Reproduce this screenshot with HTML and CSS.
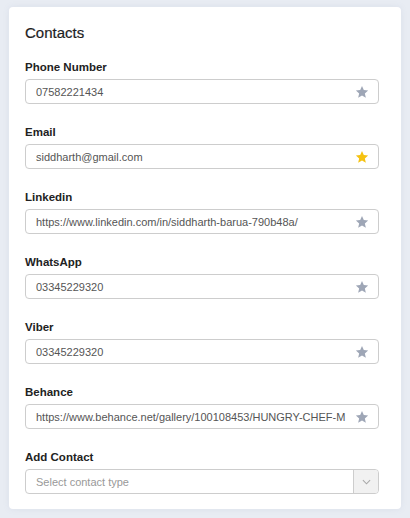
FILE: index.html
```html
<!DOCTYPE html>
<html>
<head>
<meta charset="utf-8">
<link rel="stylesheet" href="styles.css">
</head>
<body>
<div class="card">
  <h2 class="title">Contacts</h2>
  <div class="field">
    <label class="label">Phone Number</label>
    <div class="control"><span class="value">07582221434</span><svg class="star" viewBox="0 0 24 24"><path d="M12 1.8l3.1 6.9 7.4.7-5.6 5 1.7 7.4L12 18l-6.6 3.8 1.7-7.4-5.6-5 7.4-.7z"/></svg></div>
  </div>
  <div class="field">
    <label class="label">Email</label>
    <div class="control"><span class="value">siddharth@gmail.com</span><svg class="star gold" viewBox="0 0 24 24"><path d="M12 1.8l3.1 6.9 7.4.7-5.6 5 1.7 7.4L12 18l-6.6 3.8 1.7-7.4-5.6-5 7.4-.7z"/></svg></div>
  </div>
  <div class="field">
    <label class="label">Linkedin</label>
    <div class="control"><span class="value">https://www.linkedin.com/in/siddharth-barua-790b48a/</span><svg class="star" viewBox="0 0 24 24"><path d="M12 1.8l3.1 6.9 7.4.7-5.6 5 1.7 7.4L12 18l-6.6 3.8 1.7-7.4-5.6-5 7.4-.7z"/></svg></div>
  </div>
  <div class="field">
    <label class="label">WhatsApp</label>
    <div class="control"><span class="value">03345229320</span><svg class="star" viewBox="0 0 24 24"><path d="M12 1.8l3.1 6.9 7.4.7-5.6 5 1.7 7.4L12 18l-6.6 3.8 1.7-7.4-5.6-5 7.4-.7z"/></svg></div>
  </div>
  <div class="field">
    <label class="label">Viber</label>
    <div class="control"><span class="value">03345229320</span><svg class="star" viewBox="0 0 24 24"><path d="M12 1.8l3.1 6.9 7.4.7-5.6 5 1.7 7.4L12 18l-6.6 3.8 1.7-7.4-5.6-5 7.4-.7z"/></svg></div>
  </div>
  <div class="field">
    <label class="label">Behance</label>
    <div class="control"><span class="value">https://www.behance.net/gallery/100108453/HUNGRY-CHEF-M</span><svg class="star" viewBox="0 0 24 24"><path d="M12 1.8l3.1 6.9 7.4.7-5.6 5 1.7 7.4L12 18l-6.6 3.8 1.7-7.4-5.6-5 7.4-.7z"/></svg></div>
  </div>
  <div class="field">
    <label class="label">Add Contact</label>
    <div class="control select"><span class="placeholder">Select contact type</span><span class="caret"><svg viewBox="0 0 10 6"><path d="M1 1l4 4 4-4" fill="none" stroke="#a8a8a8" stroke-width="1.2"/></svg></span></div>
  </div>
</div>
</body>
</html>
```

FILE: styles.css
```css
html, body {
  margin: 0;
  padding: 0;
}
body {
  background: #e8ecf3;
  font-family: "Liberation Sans", Arial, sans-serif;
  padding: 7px 9px 9px 9px;
}
.card {
  background: #fff;
  border-radius: 4px;
  box-shadow: 0 0 6px rgba(120, 140, 170, 0.12);
  padding: 16px 22px 15px 16px;
  height: 502px;
  box-sizing: border-box;
}
.title {
  margin: 0 0 17px 0;
  font-size: 15px;
  line-height: 20px;
  font-weight: 400;
  color: #1e1e1e;
  -webkit-text-stroke: 0.2px #1e1e1e;
}
.field {
  margin-bottom: 21px;
}
.field:last-child {
  margin-bottom: 0;
}
.label {
  display: block;
  font-size: 11.5px;
  line-height: 14px;
  font-weight: 700;
  color: #222;
  margin-bottom: 5px;
}
.control {
  position: relative;
  height: 25px;
  border: 1px solid #cdcdcd;
  border-radius: 4px;
  box-sizing: border-box;
  display: flex;
  align-items: center;
  padding: 0 8px 0 10px;
  overflow: hidden;
}
.value {
  font-size: 11px;
  color: #555;
  white-space: nowrap;
  overflow: hidden;
  flex: 1;
}
.star {
  position: absolute;
  right: 9px;
  top: 5px;
  width: 14px;
  height: 14px;
  fill: #9ea6b6;
}
.star.gold {
  fill: #f5c211;
}
.select {
  padding-right: 0;
}
.placeholder {
  font-size: 11px;
  color: #999;
  flex: 1;
}
.caret {
  width: 24px;
  height: 100%;
  background: #f1f1f1;
  border-left: 1px solid #cdcdcd;
  display: flex;
  align-items: center;
  justify-content: center;
}
.caret svg {
  width: 9px;
  height: 6px;
}
```
